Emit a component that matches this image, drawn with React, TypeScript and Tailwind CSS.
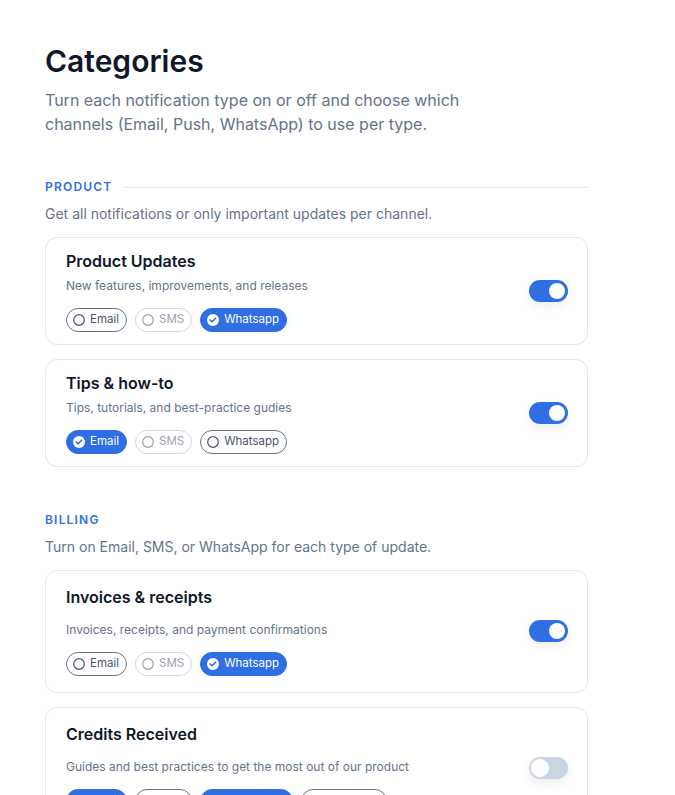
import React, { useState } from "react";

type Channel = { label: string; state: "on" | "off" | "muted" };

interface Category {
  title: string;
  desc: string;
  enabled: boolean;
  roomy?: boolean;
  channels: Channel[];
}

const sections: { label: string; rule: boolean; desc: string; items: Category[] }[] = [
  {
    label: "Product",
    rule: true,
    desc: "Get all notifications or only important updates per channel.",
    items: [
      {
        title: "Product Updates",
        desc: "New features, improvements, and releases",
        enabled: true,
        channels: [
          { label: "Email", state: "off" },
          { label: "SMS", state: "muted" },
          { label: "Whatsapp", state: "on" },
        ],
      },
      {
        title: "Tips & how-to",
        desc: "Tips, tutorials, and best-practice gudies",
        enabled: true,
        channels: [
          { label: "Email", state: "on" },
          { label: "SMS", state: "muted" },
          { label: "Whatsapp", state: "off" },
        ],
      },
    ],
  },
  {
    label: "Billing",
    rule: false,
    desc: "Turn on Email, SMS, or WhatsApp for each type of update.",
    items: [
      {
        title: "Invoices & receipts",
        desc: "Invoices, receipts, and payment confirmations",
        enabled: true,
        roomy: true,
        channels: [
          { label: "Email", state: "off" },
          { label: "SMS", state: "muted" },
          { label: "Whatsapp", state: "on" },
        ],
      },
      {
        title: "Credits Received",
        desc: "Guides and best practices to get the most out of our product",
        enabled: false,
        roomy: true,
        channels: [
          { label: "Email", state: "on" },
          { label: "SMS", state: "off" },
          { label: "Push alerts", state: "on" },
          { label: "Web push", state: "off" },
        ],
      },
    ],
  },
];

const ChannelChip: React.FC<{ channel: Channel }> = ({ channel }) => {
  if (channel.state === "on") {
    return (
      <span className="flex h-6 items-center gap-[5px] rounded-full border border-[#2f6fe3] bg-[#2f6fe3] pl-[6px] pr-[7px] text-[11.5px] text-white">
        <svg viewBox="0 0 12 12" className="h-3 w-3">
          <circle cx="6" cy="6" r="6" fill="#ffffff" />
          <path d="M3.4 6.1l1.7 1.7 3.5-3.6" fill="none" stroke="#2f6fe3" strokeWidth="1.6" strokeLinecap="round" strokeLinejoin="round" />
        </svg>
        {channel.label}
      </span>
    );
  }
  const muted = channel.state === "muted";
  return (
    <span
      className={
        muted
          ? "flex h-6 items-center gap-[5px] rounded-full border border-[#d4d8de] bg-white pl-[6px] pr-[7px] text-[11.5px] text-[#9aa3b0]"
          : "flex h-6 items-center gap-[5px] rounded-full border border-[#6b7280] bg-white pl-[6px] pr-[7px] text-[11.5px] text-[#475569]"
      }
    >
      <svg viewBox="0 0 12 12" className="h-3 w-3">
        <circle cx="6" cy="6" r="5.3" fill="none" stroke={muted ? "#9aa3b0" : "#475569"} strokeWidth="1.2" />
      </svg>
      {channel.label}
    </span>
  );
};

const Toggle: React.FC<{ initial: boolean }> = ({ initial }) => {
  const [on, setOn] = useState(initial);
  return (
    <button
      onClick={() => setOn(!on)}
      className={
        on
          ? "flex h-[22px] w-[39px] shrink-0 items-center justify-end rounded-full bg-[#2f6fe3] px-[3px] shadow-[0_4px_8px_rgba(15,23,42,0.08)]"
          : "flex h-[22px] w-[39px] shrink-0 items-center justify-start rounded-full bg-[#cbd5e1] px-[1px] shadow-[0_4px_8px_rgba(15,23,42,0.08)]"
      }
    >
      <span
        className={
          on
            ? "h-4 w-4 rounded-full bg-white"
            : "h-5 w-5 rounded-full border border-[#cbd5e1] bg-white"
        }
      />
    </button>
  );
};

const CategoryCard: React.FC<{ item: Category }> = ({ item }) => (
  <div
    className={
      item.roomy
        ? "flex items-center justify-between rounded-xl border border-[#e2e8f0] bg-white pl-5 pr-[19px] pt-[14px] pb-4"
        : "flex items-center justify-between rounded-xl border border-[#e2e8f0] bg-white pl-5 pr-[19px] pt-[11px] pb-3"
    }
  >
    <div className="flex flex-col">
      <h3 className="text-base leading-6 font-semibold text-[#0f172a]">{item.title}</h3>
      <p className={item.roomy ? "mt-[11px] text-xs leading-5 text-[#64748b]" : "mt-[3px] text-xs leading-5 text-[#64748b]"}>
        {item.desc}
      </p>
      <div className="mt-3 flex gap-2">
        {item.channels.map((c) => (
          <ChannelChip key={c.label} channel={c} />
        ))}
      </div>
    </div>
    <Toggle initial={item.enabled} />
  </div>
);

export default function App() {
  return (
    <div className="min-h-screen bg-white font-['Inter','Noto_Sans',sans-serif]">
      <div className="w-[588px] pl-[45px] pt-[43px] pb-10">
        <h1 className="text-3xl leading-9 font-semibold text-[#0f172a]">Categories</h1>
        <p className="mt-[9px] max-w-[440px] text-base leading-6 text-[#64748b]">
          Turn each notification type on or off and choose which channels (Email, Push, WhatsApp) to use per type.
        </p>

        {sections.map((s, i) => (
          <section key={s.label} className={i === 0 ? "mt-[43px]" : "mt-[45px]"}>
            <div className="flex items-center gap-3">
              <span className="text-xs leading-4 font-semibold uppercase tracking-[0.1em] text-[#2f6fe3]">
                {s.label}
              </span>
              {s.rule && <div className="h-px flex-1 bg-[#e2e8f0]" />}
            </div>
            <p className="mt-[9px] text-sm leading-5 text-[#64748b]">{s.desc}</p>
            <div className="mt-[13px] flex flex-col gap-3.5">
              {s.items.map((item) => (
                <CategoryCard key={item.title} item={item} />
              ))}
            </div>
          </section>
        ))}
      </div>
    </div>
  );
}
